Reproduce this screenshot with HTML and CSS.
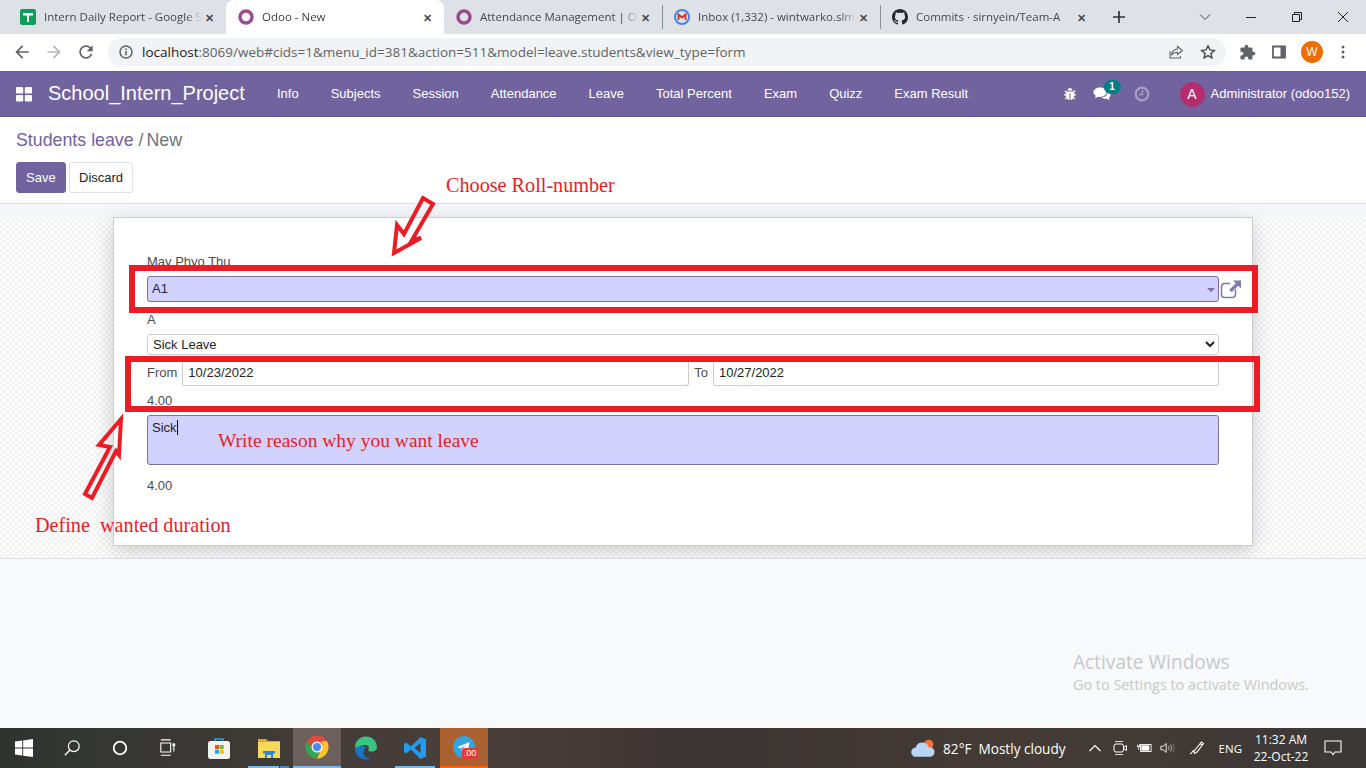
FILE: index.html
```html
<!DOCTYPE html>
<html lang="en">

<head>
	<meta charset="UTF-8">
	<title>Odoo - New</title>
	<link rel="stylesheet" href="styles.css">
</head>

<body>
	<!-- browser tabs -->
	<div class="tabstrip">
		<div class="tab">
			<svg class="favicon" viewBox="0 0 16 16"><rect width="16" height="16" rx="2" fill="#0f9d58"/><path d="M3 4h10v2.500H9V13H7V6.500H3z" fill="#fff"/></svg>
			<span class="tab-title">Intern Daily Report - Google S</span>
			<span class="tab-close">✕</span>
		</div>
		<div class="tab active">
			<svg class="favicon" viewBox="0 0 16 16"><circle cx="8" cy="8" r="6" fill="none" stroke="#9b4a8f" stroke-width="3.400"/></svg>
			<span class="tab-title">Odoo - New</span>
			<span class="tab-close">✕</span>
		</div>
		<div class="tab">
			<svg class="favicon" viewBox="0 0 16 16"><circle cx="8" cy="8" r="6" fill="none" stroke="#9b4a8f" stroke-width="3.400"/></svg>
			<span class="tab-title">Attendance Management | O</span>
			<span class="tab-close">✕</span>
		</div>
		<div class="tab sep">
			<svg class="favicon" viewBox="0 0 16 16"><circle cx="8" cy="8" r="7" fill="none" stroke="#4285f4" stroke-width="2"/><path d="M4.500 11V5.500L8 8.500l3.500-3V11" fill="none" stroke="#d93025" stroke-width="1.800"/></svg>
			<span class="tab-title">Inbox (1,332) - wintwarko.slm</span>
			<span class="tab-close">✕</span>
		</div>
		<div class="tab sep">
			<svg class="favicon" viewBox="0 0 16 16"><path fill="#24292f" d="M8 0C3.580 0 0 3.580 0 8c0 3.540 2.290 6.530 5.470 7.590.4.070.55-.17.55-.38 0-.19-.01-.82-.01-1.490-2.010.37-2.530-.49-2.690-.94-.09-.23-.48-.94-.82-1.130-.28-.15-.68-.52-.01-.53.63-.01 1.080.58 1.230.82.72 1.210 1.870.87 2.330.66.07-.52.28-.87.51-1.070-1.780-.2-3.640-.89-3.640-3.950 0-.87.31-1.590.82-2.150-.08-.2-.36-1.020.08-2.120 0 0 .67-.21 2.200.82.64-.18 1.320-.27 2-.27.68 0 1.360.09 2 .27 1.530-1.040 2.200-.82 2.200-.82.44 1.100.16 1.920.08 2.120.51.56.82 1.270.82 2.150 0 3.070-1.870 3.750-3.650 3.950.29.25.54.73.54 1.480 0 1.070-.01 1.930-.01 2.200 0 .21.15.46.55.38A8.013 8.013 0 0016 8c0-4.420-3.580-8-8-8z"/></svg>
			<span class="tab-title">Commits · sirnyein/Team-A</span>
			<span class="tab-close">✕</span>
		</div>
		<svg class="new-tab" viewBox="0 0 14 14"><path d="M7 1v12M1 7h12" stroke="#333" stroke-width="1.700" fill="none"/></svg>
		<div class="win-controls">
			<svg viewBox="0 0 12 12"><path d="M1 3.500l5 5 5-5" stroke="#444" fill="none"/></svg>
			<svg viewBox="0 0 12 12"><path d="M1 6.500h10" stroke="#222" fill="none"/></svg>
			<svg viewBox="0 0 12 12"><path d="M1.500 3.500h7v7h-7zM3.500 3.500v-2h7v7h-2" stroke="#222" fill="none"/></svg>
			<svg viewBox="0 0 12 12"><path d="M1 1l10 10M11 1L1 11" stroke="#222" fill="none"/></svg>
		</div>
	</div>

	<!-- address bar -->
	<div class="toolbar">
		<svg class="tool-icon first" viewBox="0 0 24 24"><path fill="#5f6368" d="M20 11H7.830l5.590-5.590L12 4l-8 8 8 8 1.410-1.410L7.830 13H20v-2z"/></svg>
		<svg class="tool-icon" viewBox="0 0 24 24"><path fill="#b6b8bb" d="M4 11h12.170l-5.590-5.590L12 4l8 8-8 8-1.410-1.410L16.170 13H4v-2z"/></svg>
		<svg class="tool-icon" viewBox="0 0 24 24"><path fill="#5f6368" d="M17.650 6.350C16.200 4.900 14.210 4 12 4c-4.420 0-7.990 3.580-7.990 8s3.570 8 7.990 8c3.730 0 6.840-2.550 7.730-6h-2.080c-.82 2.330-3.040 4-5.650 4-3.310 0-6-2.690-6-6s2.690-6 6-6c1.660 0 3.140.69 4.220 1.780L13 11h7V4l-2.350 2.350z"/></svg>
		<div class="omnibox">
			<svg class="omni-info" viewBox="0 0 14 14"><circle cx="7" cy="7" r="6" fill="none" stroke="#5f6368" stroke-width="1.500"/><path d="M7 6v4.200M7 3.600v1.400" stroke="#5f6368" stroke-width="1.600"/></svg>
			<span class="url"><b>localhost</b>:8069/web#cids=1&amp;menu_id=381&amp;action=511&amp;model=leave.students&amp;view_type=form</span>
			<svg class="omni-icon" viewBox="0 0 16 16"><path d="M9.500 2.500l5 4-5 4V8.200C6.500 8.200 4.800 9.300 3.500 11.300c.3-3.400 2.500-6 6-6.300z M2 7v7h10.500v-2" fill="none" stroke="#5f6368" stroke-width="1.100"/></svg>
			<svg class="omni-icon" viewBox="0 0 16 16"><path d="M8 1.800l1.900 4.100 4.400.5-3.300 3 .9 4.400L8 11.600l-3.900 2.200.9-4.400-3.300-3 4.400-.5z" fill="none" stroke="#444" stroke-width="1.400"/></svg>
		</div>
		<svg class="tool-icon ext" viewBox="0 0 24 24"><path fill="#5f6368" d="M20.500 11H19V7c0-1.100-.9-2-2-2h-4V3.500C13 2.120 11.880 1 10.500 1S8 2.120 8 3.500V5H4c-1.100 0-1.990.9-1.990 2v3.800H3.500c1.490 0 2.700 1.210 2.700 2.700s-1.210 2.700-2.700 2.700H2V20c0 1.100.9 2 2 2h3.800v-1.500c0-1.490 1.210-2.700 2.700-2.700 1.490 0 2.700 1.210 2.700 2.700V22H17c1.100 0 2-.9 2-2v-4h1.500c1.380 0 2.500-1.120 2.500-2.500S21.880 11 20.500 11z"/></svg>
		<svg class="tool-icon side" viewBox="0 0 16 16"><path d="M2 2.500h12v11H2z" fill="none" stroke="#5f6368" stroke-width="1.800"/><rect x="9.500" y="2.500" width="4.500" height="11" fill="#5f6368"/></svg>
		<span class="profile">W</span>
		<svg class="tool-icon dots" viewBox="0 0 16 16"><circle cx="8" cy="3" r="1.500" fill="#5f6368"/><circle cx="8" cy="8" r="1.500" fill="#5f6368"/><circle cx="8" cy="13" r="1.500" fill="#5f6368"/></svg>
	</div>

	<!-- odoo top menu -->
	<nav class="navbar">
		<svg class="apps-icon" viewBox="0 0 16 16"><g fill="#fff"><rect x="0" y="1" width="7.200" height="6.500" rx="1"/><rect x="8.800" y="1" width="7.200" height="6.500" rx="1"/><rect x="0" y="9" width="7.200" height="6.500" rx="1"/><rect x="8.800" y="9" width="7.200" height="6.500" rx="1"/></g></svg>
		<span class="brand">School_Intern_Project</span>
		<div class="menu">
			<a>Info</a>
			<a>Subjects</a>
			<a>Session</a>
			<a>Attendance</a>
			<a>Leave</a>
			<a>Total Percent</a>
			<a>Exam</a>
			<a>Quizz</a>
			<a>Exam Result</a>
		</div>
		<div class="systray">
			<svg class="bug" viewBox="0 0 14 14"><path fill="#fff" d="M4.500 3.500C4.700 2 5.700 1 7 1s2.300 1 2.500 2.500zM3.500 4.500h7l1.300-1.300.8.800-1.300 1.500v1.800H13v1.100h-1.700c0 .7-.2 1.300-.4 1.800l1.500 1.500-.8.800-1.300-1.300C9.500 12.300 8.300 13 7.500 13V6.500h-1V13c-.8 0-2-.7-2.800-1.800L2.400 12.500l-.8-.8 1.500-1.500c-.2-.5-.4-1.100-.4-1.800H1V7.300h1.700V5.500L1.400 4l.8-.8z"/></svg>
			<span class="chat">
				<svg viewBox="0 0 18 16"><path fill="#fff" d="M7 1.500c3.600 0 6.500 2.100 6.500 4.800S10.600 11 7 11c-.7 0-1.300-.1-1.900-.2L2 12.500l.8-2.700C1.400 8.900.5 7.700.5 6.300.5 3.600 3.400 1.500 7 1.500z"/><path fill="#fff" d="M14.500 5.500c1.800.7 3 2.100 3 3.600 0 1.100-.6 2.100-1.600 2.800l.6 2.300-2.600-1.500c-.5.1-.9.100-1.400.100-1.600 0-3-.5-4-1.400 3.800 0 6.300-2.700 6-5.900z"/></svg>
				<span class="badge">1</span>
			</span>
			<svg class="clock" viewBox="0 0 16 16"><circle cx="8" cy="8" r="6.300" fill="none" stroke="#a89fc4" stroke-width="2.200"/><path d="M8.500 4v4.500H5" fill="none" stroke="#a89fc4" stroke-width="1.400"/></svg>
			<span class="avatar">A</span>
			<span class="username">Administrator (odoo152)</span>
		</div>
	</nav>

	<!-- breadcrumb and buttons -->
	<div class="control-panel">
		<div class="breadcrumb"><a>Students leave</a> <span>/ New</span></div>
		<div class="buttons">
			<button class="btn btn-primary">Save</button>
			<button class="btn btn-secondary">Discard</button>
		</div>
	</div>

	<div class="form-view">
		<div class="sheet">
			<div class="field-text name-label">May Phyo Thu</div>
			<div class="many2one">
				<div class="many2one-input">A1<span class="caret"></span></div>
				<svg class="external" viewBox="0 0 22 20"><path d="M15.500 10.500v5a3 3 0 0 1-3 3h-8a3 3 0 0 1-3-3v-8a3 3 0 0 1 3-3H10" fill="none" stroke="#7c7bad" stroke-width="1.500"/><path d="M13 1.500h8v8l-2.800-2.800-6.500 6.500-2.400-2.400 6.500-6.500z" fill="#7c7bad"/></svg>
			</div>
			<div class="field-text class-label">A</div>
			<select class="select-field">
				<option>Sick Leave</option>
			</select>
			<div class="date-row">
				<span class="field-text">From</span>
				<input class="date-input" type="text" value="10/23/2022">
				<span class="field-text">To</span>
				<input class="date-input" type="text" value="10/27/2022">
			</div>
			<div class="field-text days">4.00</div>
			<div class="reason"><span class="reason-text">Sick</span></div>
			<div class="field-text total">4.00</div>
		</div>
	</div>

	<div class="page-rest">
		<div class="activate">
			<div class="activate-title">Activate Windows</div>
			<div>Go to Settings to activate Windows.</div>
		</div>
	</div>

	<!-- windows taskbar -->
	<div class="taskbar">
		<span class="task"><svg class="i20" viewBox="0 0 16 16"><path fill="#fff" d="M0 2.300l6.500-.9v6.200H0zM7.300 1.300L16 0v7.600H7.300zM0 8.400h6.500v6.200L0 13.700zM7.300 8.400H16V16l-8.700-1.200z"/></svg></span>
		<span class="task"><svg class="i20" viewBox="0 0 20 20"><circle cx="12" cy="8" r="6" fill="none" stroke="#fff" stroke-width="1.300"/><path d="M7.500 12.500L2 18" stroke="#fff" stroke-width="1.500"/></svg></span>
		<span class="task"><svg class="i20" viewBox="0 0 20 20"><circle cx="10" cy="10" r="7" fill="none" stroke="#fff" stroke-width="2"/></svg></span>
		<span class="task"><svg class="i20" viewBox="0 0 20 20"><path d="M2 1h11M2 4.500h11v10H2zM2 18h11M16.500 5v9" fill="none" stroke="#fff" stroke-width="1.200"/><rect x="15" y="5" width="3" height="3" fill="#fff"/></svg></span>
		<span class="task wide"><svg class="i24" viewBox="0 0 24 24"><path d="M8 6V3h8v3" fill="none" stroke="#2aa0e0" stroke-width="1.500"/><rect x="1" y="5" width="22" height="18" rx="2.500" fill="#f4f2ef"/><rect x="8" y="9" width="4" height="4" fill="#e8512a"/><rect x="12.700" y="9" width="4" height="4" fill="#7eb92c"/><rect x="8" y="13.700" width="4" height="4" fill="#18a4e8"/><rect x="12.700" y="13.700" width="4" height="4" fill="#fdb813"/></svg></span>
		<span class="task explorer"><svg class="i24" viewBox="0 0 24 24"><path d="M1 3h8l2 2h12v6H1z" fill="#e5a82c"/><rect x="1" y="6" width="22" height="16" fill="#fbd75b"/><path d="M8 22v-6h8v6h-2v-3h-4v3z" fill="#2b88d8"/><rect x="6" y="15" width="12" height="2.500" fill="#2b88d8"/></svg></span>
		<span class="task current"><svg class="i24" viewBox="0 0 24 24"><circle cx="12" cy="12" r="11.500" fill="#dd4b3e"/><path d="M12 .5A11.500 11.500 0 0 1 22 6.300H12z" fill="#dd4b3e"/><path d="M22 6.300A11.500 11.500 0 0 1 12 23.500L17 12a5 5 0 0 0-1-5.700z" fill="#fdc52c"/><path d="M1.800 6.500A11.500 11.500 0 0 0 12 23.500L15 15 8.500 15.500z" fill="#2da84f"/><circle cx="12" cy="12" r="5.500" fill="#fff"/><circle cx="12" cy="12" r="4.200" fill="#4a8af4"/></svg></span>
		<span class="task edge"><svg class="i24" viewBox="0 0 24 24"><path d="M1 12C1 5 6 .5 12 .5 18.500.5 23 5.500 23 11c0 3-2.500 4.500-5 4.500-2 0-3.500-.5-4-1.500 1.500-1 1.500-5-2.500-5C6 9 3.500 13 1 12z" fill="#39c481"/><path d="M1 12C.5 18 5.500 23.500 12 23.500c2 0 4-.5 5-1.500-4.500 1-7.500-1.500-7.500-5 0-3 1.500-5 3-6-4-1.500-9.500 0-11.500.5z" fill="#1575c9"/></svg></span>
		<span class="task vscode"><svg class="i24" viewBox="0 0 24 24"><path d="M17.500 1L23 3.500v17L17.500 23 8 13.500l-5 4-2-1.500v-8l2-1.500 5 4zM17.500 7l-6 5 6 5z" fill="#1f9cf0"/></svg></span>
		<span class="task tele"><span class="tele-wrap"><svg class="i22" viewBox="0 0 22 22"><circle cx="11" cy="11" r="11" fill="#2ea6e0"/><path d="M4.500 11l12-5-2 11-3.500-2.500-2 2-.5-3.500 5-4.500-6.500 4z" fill="#fff"/></svg><span class="tele-count">.00</span></span></span>

		<div class="tray">
			<svg class="weather" viewBox="0 0 24 18"><circle cx="17" cy="5" r="4.500" fill="#f2743c"/><path d="M5 17a4.500 4.500 0 0 1-.5-9A6.500 6.500 0 0 1 17 8a4.500 4.500 0 0 1 2 9z" fill="#b8d6f4"/></svg>
			<span class="temp">82°F</span>
			<span class="cond">Mostly cloudy</span>
			<svg class="tray-icon chev" viewBox="0 0 14 14"><path d="M1.500 10L7 4.500l5.500 5.500" fill="none" stroke="#fff" stroke-width="1.200"/></svg>
			<svg class="tray-icon" viewBox="0 0 16 16"><path d="M3 1.500h8M3 14.500h8" stroke="#ddd"/><rect x="2" y="4" width="9.500" height="8" rx="2" fill="none" stroke="#fff"/><path d="M11.500 7.500l3-2v5l-3-2z" fill="none" stroke="#fff"/></svg>
			<svg class="tray-icon" viewBox="0 0 18 14"><rect x="5" y="3" width="12" height="8" fill="none" stroke="#fff"/><rect x="6" y="4" width="9" height="6" fill="#fff"/><path d="M1 5h4M2 3v3M4 3v3M3 6v3" stroke="#fff"/></svg>
			<svg class="tray-icon" viewBox="0 0 18 14"><path d="M1 5h2.500L7 2v10L3.500 9H1z" fill="none" stroke="#fff"/><path d="M9.500 4.500q1.500 2.500 0 5M12 3q2 4 0 8" fill="none" stroke="#bbb"/><path d="M14.500 1.500q3 5.500 0 11" fill="none" stroke="#777"/></svg>
			<svg class="tray-icon pen" viewBox="0 0 16 16"><path d="M1 14c3-1 2-4 4-3l1-1 6.500-8 2 1.500L8 12l-2.500 1.500L5 11M11 3.500l2 1.500" fill="none" stroke="#fff" stroke-width="1.100"/></svg>
			<span class="lang">ENG</span>
			<div class="clock-text"><div>11:32 AM</div><div>22-Oct-22</div></div>
			<svg class="tray-icon notif" viewBox="0 0 18 16"><path d="M1 1h16v11h-6l-2 2.500L7 12H1z" fill="none" stroke="#fff" stroke-width="1.100"/></svg>
		</div>
	</div>

	<!-- annotations drawn over the screenshot -->
	<div class="mark mark-roll"></div>
	<div class="mark mark-dates"></div>
	<svg class="arrows" viewBox="0 0 1366 768">
		<path d="M394 253L397 225 404 234 423 198 433 204 412 240 421 238z" fill="none" stroke="#ed1c24" stroke-width="4"/>
		<path d="M121 419L99 445 110 447 85 494 92 498 116 451 119 455z" fill="none" stroke="#ed1c24" stroke-width="4"/>
	</svg>
	<span class="note note-roll">Choose Roll-number</span>
	<span class="note note-reason">Write reason why you want leave</span>
	<span class="note note-duration">Define&nbsp; wanted duration</span>
</body>

</html>
```

FILE: styles.css
```css
* {
	box-sizing: border-box;
}

html,
body {
	margin: 0;
	height: 768px;
	overflow: hidden;
}

body {
	position: relative;
	display: flex;
	flex-direction: column;
	font-family: 'Liberation Sans', Arial, sans-serif;
	font-size: 13px;
	color: #212529;
	background-color: #fff;
}

/* browser tabs */
.tabstrip {
	display: flex;
	align-items: center;
	height: 34px;
	padding-left: 8px;
	background-color: #dee1e6;
	flex-shrink: 0;
}

.tab {
	display: flex;
	align-items: center;
	width: 218px;
	height: 34px;
	padding: 0 10px 0 12px;
	font-family: 'Open Sans', sans-serif;
	font-size: 11.5px;
	color: #45474b;
}

.tab.active {
	background-color: #fff;
	border-radius: 8px 8px 0 0;
	color: #3c4043;
}

.tab.sep {
	border-left: 1px solid #8e9094;
	height: 24px;
	padding-left: 11px;
}

.tab.sep:last-of-type {
	border-right: 1px solid #8e9094;
}

.favicon {
	width: 16px;
	height: 16px;
	margin-right: 8px;
	flex-shrink: 0;
}

.tab-title {
	flex: 1;
	min-width: 0;
	padding-bottom: 2px;
	white-space: nowrap;
	overflow: hidden;
	-webkit-mask-image: linear-gradient(to right, #000 90%, transparent);
}

.tab-close {
	width: 14px;
	font-size: 11px;
	font-weight: bold;
	text-align: center;
	color: #4a4c50;
}

.new-tab {
	width: 14px;
	height: 14px;
	margin-left: 14px;
}

.win-controls {
	display: flex;
	align-items: center;
	margin-left: 73px;
	gap: 34px;
}

.win-controls svg {
	width: 12px;
	height: 12px;
}

/* address bar */
.toolbar {
	display: flex;
	align-items: center;
	height: 37px;
	padding: 0 0 1px 12px;
	background-color: #fff;
	flex-shrink: 0;
}

.tool-icon {
	width: 20px;
	height: 20px;
	margin-right: 12px;
}

.omnibox {
	display: flex;
	align-items: center;
	width: 1118px;
	height: 28px;
	margin-right: 13px;
	padding: 0 10px 0 11px;
	background-color: #f1f3f4;
	border-radius: 14px;
	flex-shrink: 0;
}

.omni-info {
	width: 14px;
	height: 14px;
	margin-right: 9px;
}

.url {
	flex: 1;
	padding-bottom: 1px;
	font-family: 'Open Sans', sans-serif;
	font-size: 13.5px;
	color: #5f6368;
	white-space: nowrap;
}

.url b {
	font-weight: normal;
	color: #202124;
}

.omni-icon {
	width: 16px;
	height: 16px;
	margin-left: 16px;
}

.tool-icon.ext {
	width: 17px;
	height: 17px;
	margin-right: 15px;
}

.tool-icon.side {
	width: 16px;
	height: 16px;
	margin-right: 14px;
}

.profile {
	width: 22px;
	height: 22px;
	margin-right: 12px;
	border-radius: 50%;
	background-color: #ef6c00;
	color: #fff;
	font-size: 12px;
	line-height: 22px;
	text-align: center;
}

.tool-icon.dots {
	width: 16px;
	height: 16px;
	margin-right: 0;
}

/* odoo navbar */
.navbar {
	display: flex;
	align-items: center;
	height: 46px;
	padding: 0 16px;
	background-color: #71639e;
	border-top: 1px solid #6a5d94;
	border-bottom: 1px solid #5f5489;
	color: #fff;
	flex-shrink: 0;
}

.apps-icon {
	width: 16px;
	height: 16px;
	margin-right: 16px;
}

.brand {
	width: 229px;
	padding-bottom: 2px;
	font-size: 20px;
}

.menu {
	display: flex;
	gap: 32px;
	padding-bottom: 2px;
}

.systray {
	display: flex;
	align-items: center;
	margin-left: auto;
}

.bug {
	width: 14px;
	height: 14px;
}

.chat {
	position: relative;
	width: 18px;
	height: 16px;
	margin-left: 16px;
}

.chat svg {
	display: block;
	width: 18px;
	height: 16px;
}

.badge {
	position: absolute;
	top: -6px;
	left: 11px;
	width: 17px;
	height: 14px;
	border-radius: 8px;
	background-color: #017e84;
	font-size: 10px;
	font-weight: bold;
	line-height: 14px;
	text-align: center;
}

.clock {
	width: 16px;
	height: 16px;
	margin-left: 23px;
}

.avatar {
	width: 25px;
	height: 25px;
	margin-left: 30px;
	margin-right: 6px;
	border-radius: 50%;
	background-color: #b42d6f;
	font-size: 14px;
	line-height: 25px;
	text-align: center;
}

.username {
	padding-bottom: 2px;
}

/* breadcrumb */
.control-panel {
	height: 87px;
	padding: 13px 16px 0;
	background-color: #fff;
	border-bottom: 1px solid #dee2e6;
	flex-shrink: 0;
}

.breadcrumb {
	font-size: 17.8px;
	line-height: 21px;
	color: #6c757d;
}

.breadcrumb a {
	color: #71639e;
}

.breadcrumb span {
	word-spacing: -2px;
}

.buttons {
	display: flex;
	gap: 3px;
	margin-top: 11px;
}

.btn {
	height: 31px;
	padding: 0 11px 0 9px;
	font-family: 'Liberation Sans', Arial, sans-serif;
	font-size: 13px;
	border-radius: 3px;
}

.btn-primary {
	width: 50px;
	background-color: #71639e;
	border: 1px solid #71639e;
	color: #fff;
}

.btn-secondary {
	width: 64px;
	background-color: #fff;
	border: 1px solid #dee2e6;
	color: #212529;
}

/* form */
.form-view {
	display: flex;
	justify-content: center;
	height: 355px;
	padding: 13px 113px;
	background-color: #fafafa;
	background-image: linear-gradient(#f6f7fa, #f6f7fa), repeating-conic-gradient(#f3f3f3 0 25%, #fdfdfd 0 50%);
	background-size: 100% 13px, 6px 6px;
	background-repeat: no-repeat, repeat;
	border-bottom: 1px solid #dee2e6;
	flex-shrink: 0;
}

.sheet {
	width: 1140px;
	height: 329px;
	padding: 36px 33px 0;
	background-color: #fff;
	border: 1px solid #c9ccd2;
	box-shadow: 0 5px 20px -1px rgba(0, 0, 0, 0.2);
}

.field-text {
	color: #4c4c4c;
	line-height: 16px;
}

.many2one {
	display: flex;
	align-items: center;
	margin-top: 6px;
}

.many2one-input {
	position: relative;
	flex-shrink: 0;
	width: 1072px;
	height: 26px;
	padding-left: 4px;
	line-height: 24px;
	font-size: 13px;
	background-color: #d2d2ff;
	border: 1px solid #7c6fa8;
	border-radius: 3px;
}

.caret {
	position: absolute;
	right: 3px;
	top: 11px;
	border-top: 4px solid #7c6fa8;
	border-left: 4px solid transparent;
	border-right: 4px solid transparent;
}

.external {
	width: 22px;
	height: 20px;
	margin-left: 1px;
	flex-shrink: 0;
}

.class-label {
	margin-top: 10px;
}

.select-field {
	display: block;
	width: 1072px;
	height: 21px;
	margin-top: 6px;
	padding-left: 1px;
	font-family: 'Liberation Sans', Arial, sans-serif;
	font-size: 13px;
	color: #212529;
	background-color: #fff;
	border: 1px solid #ccc;
	border-radius: 3px;
}

.date-row {
	display: flex;
	align-items: center;
	gap: 5px;
	width: 1072px;
	margin-top: 5px;
}

.date-input {
	flex: 1;
	min-width: 0;
	height: 26px;
	padding: 0 5px;
	font-family: 'Liberation Sans', Arial, sans-serif;
	font-size: 13px;
	color: #212529;
	background-color: #fff;
	border: 1px solid #ccc;
	border-top: none;
	border-radius: 0 0 3px 3px;
}

.date-input + .field-text + .date-input {
	flex: 0 0 506px;
}

.days {
	margin-top: 7px;
}

.reason {
	width: 1072px;
	height: 50px;
	margin-top: 6px;
	padding: 4px;
	line-height: 16px;
	background-color: #d2d2ff;
	border: 1px solid #7c6fa8;
	border-radius: 3px;
}

.reason-text {
	border-right: 1px solid #111;
}

.total {
	margin-top: 13px;
}

.page-rest {
	position: relative;
	flex: 1;
	background-color: #f8f9fb;
}

.activate {
	position: absolute;
	left: 1073px;
	top: 90px;
	font-family: 'Open Sans', sans-serif;
	font-size: 14.4px;
	color: #c6c8cb;
	white-space: nowrap;
}

.activate-title {
	font-size: 19.1px;
	line-height: 26px;
}

/* taskbar */
.taskbar {
	display: flex;
	height: 40px;
	background: linear-gradient(to right, #2f3430, #4b3f3b 35%, #3c3433 50%, #443b36 75%, #3b3837);
	color: #fff;
	flex-shrink: 0;
}

.task {
	display: flex;
	align-items: center;
	justify-content: center;
	width: 48px;
	height: 40px;
}

.task.wide {
	width: 53px;
}

.task.explorer {
	background-image: linear-gradient(#76b9ed, #76b9ed), linear-gradient(#4f88b4, #4f88b4);
	background-size: 31px 2px, 9px 2px;
	background-position: 3px 100%, 35px 100%;
	background-repeat: no-repeat;
}

.task.current {
	background-color: #6b605c;
	border-bottom: 2px solid #76b9ed;
}

.task.edge {
	width: 49px;
}

.task.vscode {
	width: 50px;
	background-image: linear-gradient(#76b9ed, #76b9ed);
	background-size: 40px 2px;
	background-position: 5px 100%;
	background-repeat: no-repeat;
}

.task.tele {
	background-color: #a9622f;
	border-bottom: 2px solid #f7630c;
}

.tele-wrap {
	position: relative;
	display: block;
	width: 22px;
	height: 22px;
}

.tele-count {
	position: absolute;
	left: 9px;
	top: 12px;
	width: 16px;
	height: 11px;
	border-radius: 2px;
	background-color: #e53935;
	font-size: 9px;
	line-height: 11px;
	text-align: center;
}

.i20 {
	width: 18px;
	height: 18px;
}

.i24 {
	width: 24px;
	height: 24px;
}

.i22 {
	display: block;
	width: 22px;
	height: 22px;
}

.tray {
	display: flex;
	align-items: center;
	margin-left: auto;
	padding-right: 24px;
	font-family: 'Open Sans', sans-serif;
	font-size: 13.6px;
}

.weather {
	width: 25px;
	height: 19px;
	margin-right: 7px;
}

.temp {
	margin-right: 7px;
}

.cond {
	margin-right: 22px;
}

.tray-icon {
	width: 16px;
	height: 16px;
	margin-right: 8px;
}

.tray-icon.chev {
	width: 14px;
	height: 14px;
	margin-right: 10px;
}

.tray-icon.pen {
	margin-left: 5px;
	margin-right: 14px;
}

.lang {
	font-size: 11.5px;
	margin-right: 11px;
}

.clock-text {
	width: 56px;
	margin-right: 15px;
	font-size: 12px;
	line-height: 17px;
	text-align: center;
}

.tray-icon.notif {
	width: 18px;
	margin-right: 0;
}

/* annotations */
.mark {
	position: absolute;
	border: 6px solid #ed1c24;
}

.mark-roll {
	left: 129px;
	top: 265px;
	width: 1129px;
	height: 48px;
}

.mark-dates {
	left: 125px;
	top: 356px;
	width: 1135px;
	height: 56px;
}

.arrows {
	position: absolute;
	left: 0;
	top: 0;
	width: 1366px;
	height: 768px;
	pointer-events: none;
}

.note {
	position: absolute;
	font-family: 'Liberation Serif', 'Times New Roman', serif;
	font-size: 20.2px;
	color: #ed1c24;
	white-space: nowrap;
}

.note-roll {
	left: 446px;
	top: 174px;
}

.note-reason {
	left: 218px;
	top: 430px;
	font-size: 19.5px;
}

.note-duration {
	left: 35px;
	top: 514px;
}
```
